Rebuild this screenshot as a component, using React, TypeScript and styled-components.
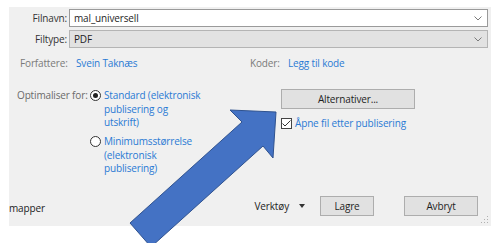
import React from 'react';
import styled, {createGlobalStyle} from "styled-components";

const GlobalStyle = createGlobalStyle`
  html, body {
    margin: 0;
    padding: 0;
    background: #ffffff;
  }
  body {
    width: 500px;
    height: 243px;
    overflow: hidden;
    position: relative;
    font-family: 'Open Sans', 'Noto Sans', sans-serif;
    font-size: 10px;
    letter-spacing: -0.15px;
    color: #222222;
  }
`

const Chevron = () => (
    <svg width="8" height="5" viewBox="0 0 8 5">
        <path d="M0.5 0.5 L4 4 L7.5 0.5" fill="none" stroke="#7a7a7a" strokeWidth="1"/>
    </svg>
)

const BigArrow = () => (
    <ArrowSvg width="500" height="243" viewBox="0 0 500 243">
        <polygon
            points="130,223 242,122 230,110 276,112 273,158 263,146 151,247"
            fill="#4472c4"
            stroke="#2f528f"
            strokeWidth="1"
        />
    </ArrowSvg>
)

export default function App() {
    return (
        <>
            <GlobalStyle/>
            <Panel>
                <FieldRow>
                    <FieldLabel>Filnavn:</FieldLabel>
                    <Select>
                        <span>mal_universell</span>
                        <Chevron/>
                    </Select>
                </FieldRow>
                <FieldRow>
                    <FieldLabel>Filtype:</FieldLabel>
                    <Select $disabled>
                        <span>PDF</span>
                        <Chevron/>
                    </Select>
                </FieldRow>

                <MetaRow>
                    <MetaGroup>
                        <MetaLabel $w={56}>Forfattere:</MetaLabel>
                        <Link>Svein Taknæs</Link>
                    </MetaGroup>
                    <MetaGroup>
                        <MetaLabel $w={38}>Koder:</MetaLabel>
                        <Link>Legg til kode</Link>
                    </MetaGroup>
                </MetaRow>

                <OptionsArea>
                    <OptimizeBlock>
                        <OptLabel>Optimaliser for:</OptLabel>
                        <RadioList>
                            <RadioOption>
                                <Radio $checked/>
                                <Link>Standard (elektronisk<br/>publisering og<br/>utskrift)</Link>
                            </RadioOption>
                            <RadioOption>
                                <Radio/>
                                <Link>Minimumsstørrelse<br/>(elektronisk<br/>publisering)</Link>
                            </RadioOption>
                        </RadioList>
                    </OptimizeBlock>
                    <SideBlock>
                        <Button $w={134}>Alternativer...</Button>
                        <CheckRow>
                            <CheckBox>
                                <svg width="9" height="7" viewBox="0 0 9 7">
                                    <path d="M0.5 3.5 L3 6 L8.5 0.5" fill="none" stroke="#333" strokeWidth="1"/>
                                </svg>
                            </CheckBox>
                            <Link>Åpne fil etter publisering</Link>
                        </CheckRow>
                    </SideBlock>
                </OptionsArea>

                <BottomRow>
                    <Cut>mapper</Cut>
                    <Tools>
                        Verktøy
                        <Caret/>
                    </Tools>
                    <Button $w={54}>Lagre</Button>
                    <Button $w={74} $gap={30}>Avbryt</Button>
                </BottomRow>
                <Grip>
                    <svg width="8" height="8" viewBox="0 0 8 8">
                        <rect x="6" y="0" width="1" height="1" fill="#b0b0b0"/>
                        <rect x="3" y="3" width="1" height="1" fill="#b0b0b0"/>
                        <rect x="6" y="3" width="1" height="1" fill="#b0b0b0"/>
                        <rect x="0" y="6" width="1" height="1" fill="#b0b0b0"/>
                        <rect x="3" y="6" width="1" height="1" fill="#b0b0b0"/>
                        <rect x="6" y="6" width="1" height="1" fill="#b0b0b0"/>
                    </svg>
                </Grip>
            </Panel>
            <BigArrow/>
        </>
    );
}

const Panel = styled.div`
  position: relative;
  margin: 7px 0 0 9px;
  width: 482px;
  height: 219px;
  box-sizing: border-box;
  padding: 2px 3px 0 0;
  background: #f0f0f0;
  display: flex;
  flex-direction: column;
`

const FieldRow = styled.div`
  display: grid;
  grid-template-columns: 58px 1fr;
  column-gap: 2px;
  align-items: center;

  & + & {
    margin-top: 3px;
  }
`

const FieldLabel = styled.span`
  text-align: right;
  color: #333333;
`

const Select = styled.div<{ $disabled?: boolean }>`
  height: 18px;
  box-sizing: border-box;
  border: 1px solid ${p => p.$disabled ? '#b4b4b4' : '#9a9a9a'};
  background: ${p => p.$disabled ? '#e2e2e2' : '#ffffff'};
  display: flex;
  align-items: center;
  justify-content: space-between;
  padding: 0 4px 0 4px;
  color: #1e1e1e;

  svg {
    margin-right: 1px;
  }
`

const MetaRow = styled.div`
  display: grid;
  grid-template-columns: 230px 1fr;
  padding-left: 11px;
  margin-top: 8px;
  line-height: 14px;
`

const MetaGroup = styled.div`
  display: flex;
`

const MetaLabel = styled.span<{ $w: number }>`
  width: ${p => p.$w}px;
  color: #7a7a7a;
`

const Link = styled.span`
  color: #2a7ad4;
`

const OptionsArea = styled.div`
  display: grid;
  grid-template-columns: 272px 1fr;
  margin-top: 19px;
`

const OptimizeBlock = styled.div`
  display: flex;
  padding-left: 8px;
  line-height: 13.5px;
`

const OptLabel = styled.span`
  width: 73px;
  white-space: nowrap;
  color: #6a6a6a;
`

const RadioList = styled.div`
  display: flex;
  flex-direction: column;
  gap: 5.5px;
`

const RadioOption = styled.div`
  display: flex;
  align-items: flex-start;
  gap: 3px;
`

const Radio = styled.span<{ $checked?: boolean }>`
  width: 11px;
  height: 11px;
  margin-top: 1px;
  box-sizing: border-box;
  border-radius: 50%;
  border: 1px solid #333333;
  background: #ffffff;
  flex-shrink: 0;
  display: flex;
  align-items: center;
  justify-content: center;

  &::after {
    content: '';
    width: 5px;
    height: 5px;
    border-radius: 50%;
    background: ${p => p.$checked ? '#222222' : 'transparent'};
  }
`

const SideBlock = styled.div`
  display: flex;
  flex-direction: column;
  align-items: flex-start;
  gap: 7px;
`

const Button = styled.div<{ $w: number; $gap?: number }>`
  width: ${p => p.$w}px;
  height: 20px;
  margin-left: ${p => p.$gap ?? 0}px;
  box-sizing: border-box;
  border: 1px solid #adadad;
  background: #e1e1e1;
  display: flex;
  align-items: center;
  justify-content: center;
  color: #1e1e1e;
`

const CheckRow = styled.div`
  display: flex;
  align-items: center;
  gap: 3px;
`

const CheckBox = styled.span`
  width: 11px;
  height: 11px;
  box-sizing: border-box;
  border: 1px solid #444444;
  background: #ffffff;
  display: flex;
  align-items: center;
  justify-content: center;
`

const BottomRow = styled.div`
  display: flex;
  align-items: center;
  margin-top: auto;
  margin-bottom: 10px;
  margin-right: 10px;
`

const Cut = styled.span`
  color: #222222;
  margin-right: auto;
  margin-top: 3px;
`

const Tools = styled.span`
  display: flex;
  align-items: center;
  gap: 10px;
  color: #222222;
  margin-right: 15px;
`

const Caret = styled.span`
  width: 0;
  height: 0;
  border-left: 3px solid transparent;
  border-right: 3px solid transparent;
  border-top: 4px solid #333333;
`

const Grip = styled.span`
  position: absolute;
  right: 2px;
  bottom: 2px;
  display: flex;
`

const ArrowSvg = styled.svg`
  position: absolute;
  left: 0;
  top: 0;
  pointer-events: none;
`
